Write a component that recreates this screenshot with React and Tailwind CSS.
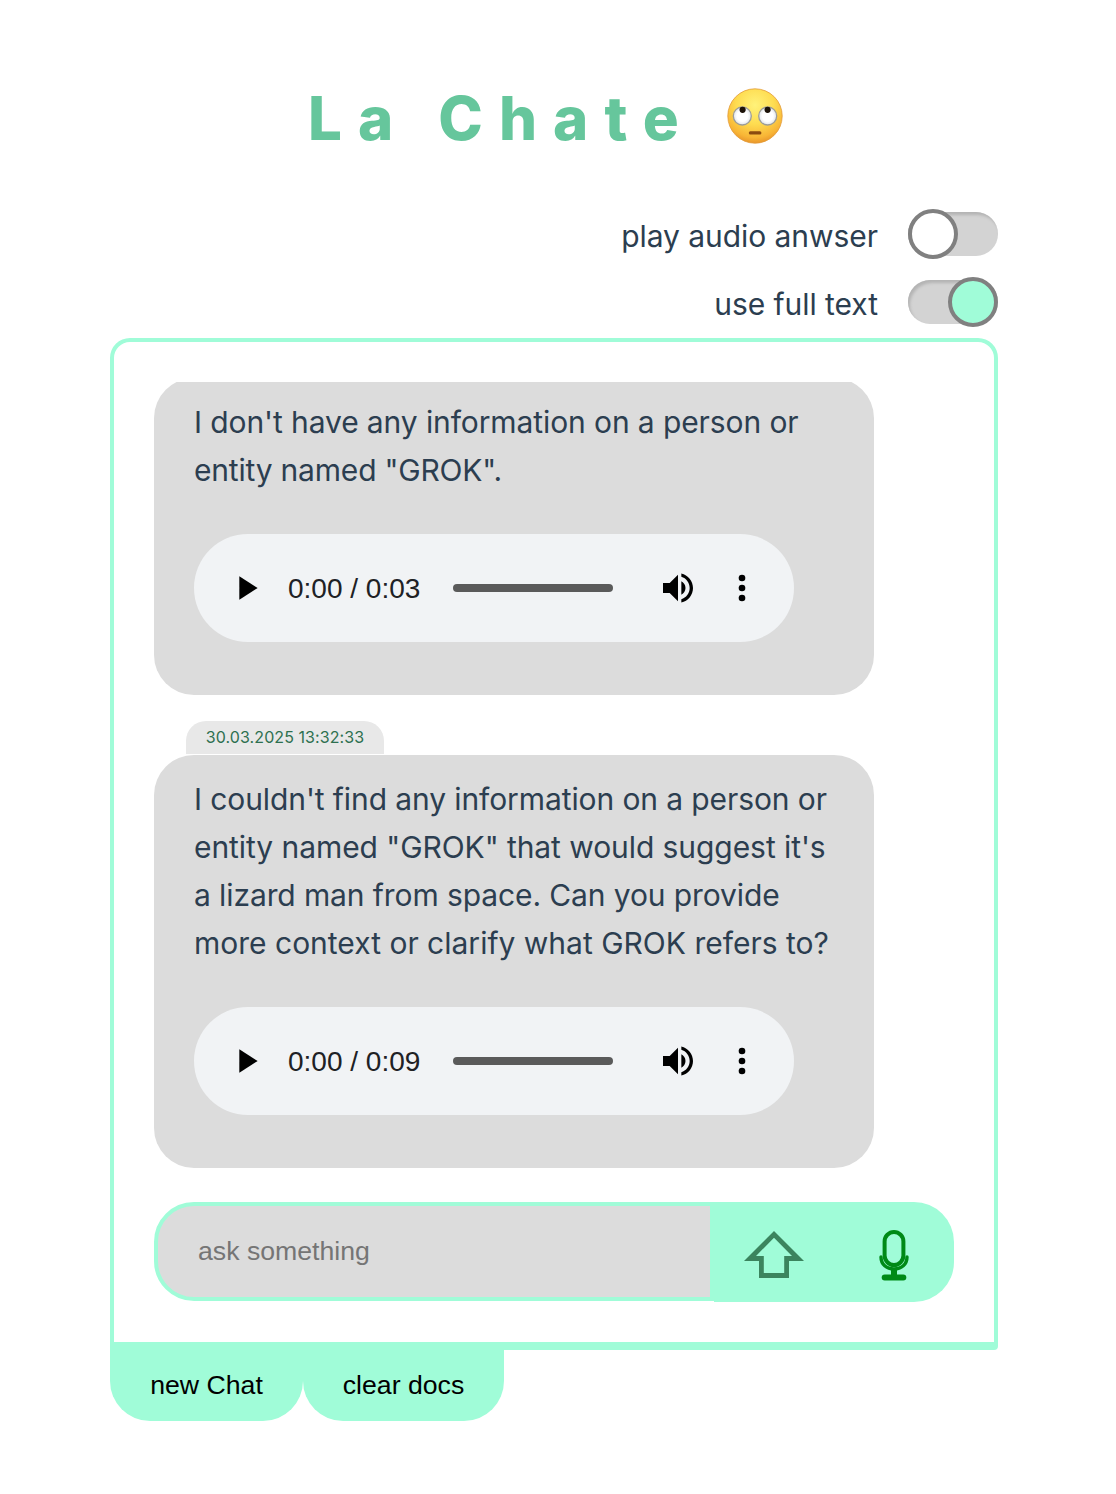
function Toggle({ label, on }) {
  return (
    <div className="flex h-[68px] items-center justify-end">
      <span className="mr-[30px] pt-1 text-[30px] leading-[48px] tracking-[-0.05px]">{label}</span>
      <div className="relative h-11 w-[90px] rounded-full bg-[#d3d3d3] shadow-[inset_2px_3px_3px_#b4b4b4]">
        <div
          className={
            on
              ? "absolute -top-[3px] right-0 size-[50px] rounded-full border-4 border-[#808080] bg-[#a0fcd8]"
              : "absolute -top-[3px] left-0 size-[50px] rounded-full border-4 border-[#808080] bg-white"
          }
        />
      </div>
    </div>
  );
}

function Audio({ duration }) {
  return (
    <div className="mt-10 flex h-[108px] w-[600px] items-center rounded-full bg-[#f1f3f5] pl-8 text-black">
      <svg viewBox="0 0 24 24" className="size-10" fill="currentColor">
        <path d="M8 5v14l11-7z" />
      </svg>
      <span className="ml-[22px] w-[165px] whitespace-nowrap pt-0.5 font-['Liberation_Sans',sans-serif] text-[28px] leading-8 tracking-normal text-[#202124]">
        0:00 / {duration}
      </span>
      <div className="h-2 w-40 rounded-full bg-[#5a5a5a]" />
      <svg viewBox="0 0 24 24" className="ml-[45px] size-10" fill="currentColor">
        <path d="M3 9v6h4l5 5V4L7 9H3zm13.5 3c0-1.77-1.02-3.29-2.5-4.03v8.05c1.48-.73 2.5-2.25 2.5-4.02zM14 3.23v2.06c2.89.86 5 3.54 5 6.71s-2.11 5.85-5 6.71v2.06c4.01-.91 7-4.49 7-8.77s-2.99-7.86-7-8.77z" />
      </svg>
      <svg viewBox="0 0 24 24" className="ml-6 size-10" fill="currentColor">
        <circle cx="12" cy="6" r="2" />
        <circle cx="12" cy="12" r="2" />
        <circle cx="12" cy="18" r="2" />
      </svg>
    </div>
  );
}

function Message({ lines, duration }) {
  return (
    <div className="w-[720px] shrink-0 rounded-[40px] bg-[#dcdcdc] px-10 pb-[53px] pt-5">
      <div className="whitespace-nowrap text-[30px] leading-[48px]">
        {lines.map(([text, tracking]) => (
          <p key={text} className={tracking}>
            {text}
          </p>
        ))}
      </div>
      <Audio duration={duration} />
    </div>
  );
}

function RollingEyes() {
  return (
    <svg viewBox="0 0 56 56" className="ml-[32px] size-14 shrink-0">
      <defs>
        <radialGradient id="face" cx="0.5" cy="0.3" r="0.7">
          <stop offset="0" stopColor="#fff27a" />
          <stop offset="0.5" stopColor="#fedc50" />
          <stop offset="0.85" stopColor="#f8b536" />
          <stop offset="1" stopColor="#e9962a" />
        </radialGradient>
        <radialGradient id="eye">
          <stop offset="0.6" stopColor="#ffffff" />
          <stop offset="1" stopColor="#dfe3e8" />
        </radialGradient>
      </defs>
      <circle cx="28" cy="28" r="27.2" fill="url(#face)" stroke="#e29a38" strokeWidth="0.8" />
      <circle cx="15.3" cy="28" r="9" fill="url(#eye)" stroke="#9c9c98" strokeWidth="1.3" />
      <circle cx="40.7" cy="28" r="9" fill="url(#eye)" stroke="#9c9c98" strokeWidth="1.3" />
      <circle cx="15.6" cy="21.8" r="3.1" fill="#1c1208" />
      <circle cx="40.6" cy="21.8" r="3.1" fill="#1c1208" />
      <rect x="21.8" y="43.3" width="12.6" height="3.2" rx="1.5" fill="#8a4a10" />
    </svg>
  );
}

export default function App() {
  return (
    <div className="flex h-[1494px] w-[1116px] flex-col bg-white pl-[110px] pr-[118px] font-['Inter',sans-serif] text-[#2c3e50]">
      <header className="flex h-[200px] items-center pl-[198px] pt-8">
        <h1 className="whitespace-pre pt-[3px] text-[60px] font-extrabold leading-none tracking-[16px] text-[#66c69c]">La Chate</h1>
        <RollingEyes />
      </header>
      <section className="h-[138px]">
        <Toggle label="play audio anwser" />
        <Toggle label="use full text" on />
      </section>
      <main className="h-[1012px] rounded-br-[4px] rounded-t-[20px] border-4 border-b-8 border-[#a0fcd8] px-10 pt-10">
        <div className="flex h-[786px] flex-col justify-end overflow-hidden">
          <Message
            lines={[
              ["I don't have any information on a person or", "tracking-[-0.1px]"],
              ['entity named "GROK".', "tracking-[-0.2px]"],
            ]}
            duration="0:03"
          />
          <div className="ml-8 mt-[26px] h-[33px] w-[198px] shrink-0 rounded-t-[20px] bg-[#e8e8e8] text-center text-[16px] leading-[33px] tracking-[0.08px] text-[#2e7050]">
            30.03.2025 13:32:33
          </div>
          <div className="h-px shrink-0" />
          <Message
            lines={[
              ["I couldn't find any information on a person or", "tracking-[-0.1px]"],
              ['entity named "GROK" that would suggest it\'s', "tracking-[-0.07px]"],
              ["a lizard man from space. Can you provide", "tracking-[-0.1px]"],
              ["more context or clarify what GROK refers to?", "tracking-normal"],
            ]}
            duration="0:09"
          />
        </div>
        <div className="mt-[34px] flex">
          <input
            placeholder="ask something"
            className="h-[99px] w-[560px] rounded-l-[40px] border-4 border-[#a0fcd8] bg-[#dcdcdc] pl-10 font-['Liberation_Sans',sans-serif] text-[26.67px] placeholder:text-[#757575]"
          />
          <div className="flex h-[100px] w-60 rounded-r-[40px] bg-[#a0fcd8]">
            <button className="flex w-[120px] justify-center pt-[29px]">
              <svg viewBox="0 0 60 47" className="h-[47px] w-[60px]" fill="#3b845e" fillRule="evenodd">
                <path d="M30 0L60 30H45V47H15V30H0zM30 6.7L12 25H19.8V42H40.2V25H48z" />
              </svg>
            </button>
            <button className="flex w-[120px] justify-center pt-7">
              <svg viewBox="0 0 30 51" className="h-[51px] w-[30px]" fill="none" stroke="#008a17" strokeLinecap="round">
                <rect x="5.6" y="2" width="18.8" height="33" rx="9.4" strokeWidth="4" />
                <path d="M2 27c0 7.500 5.500 12 13 12s13-4.500 13-12" strokeWidth="3.4" />
                <path d="M15 39v8" strokeWidth="6" strokeLinecap="butt" />
                <path d="M5.700 47.500h18.600" strokeWidth="6" />
              </svg>
            </button>
          </div>
        </div>
      </main>
      <footer className="flex font-['Liberation_Sans',sans-serif] text-[26.67px] text-black">
        <button className="h-[71px] w-[193px] rounded-b-[40px] bg-[#a0fcd8] pb-0.5">new Chat</button>
        <button className="h-[71px] w-[201px] rounded-b-[40px] bg-[#a0fcd8] pb-0.5">clear docs</button>
      </footer>
    </div>
  );
}
